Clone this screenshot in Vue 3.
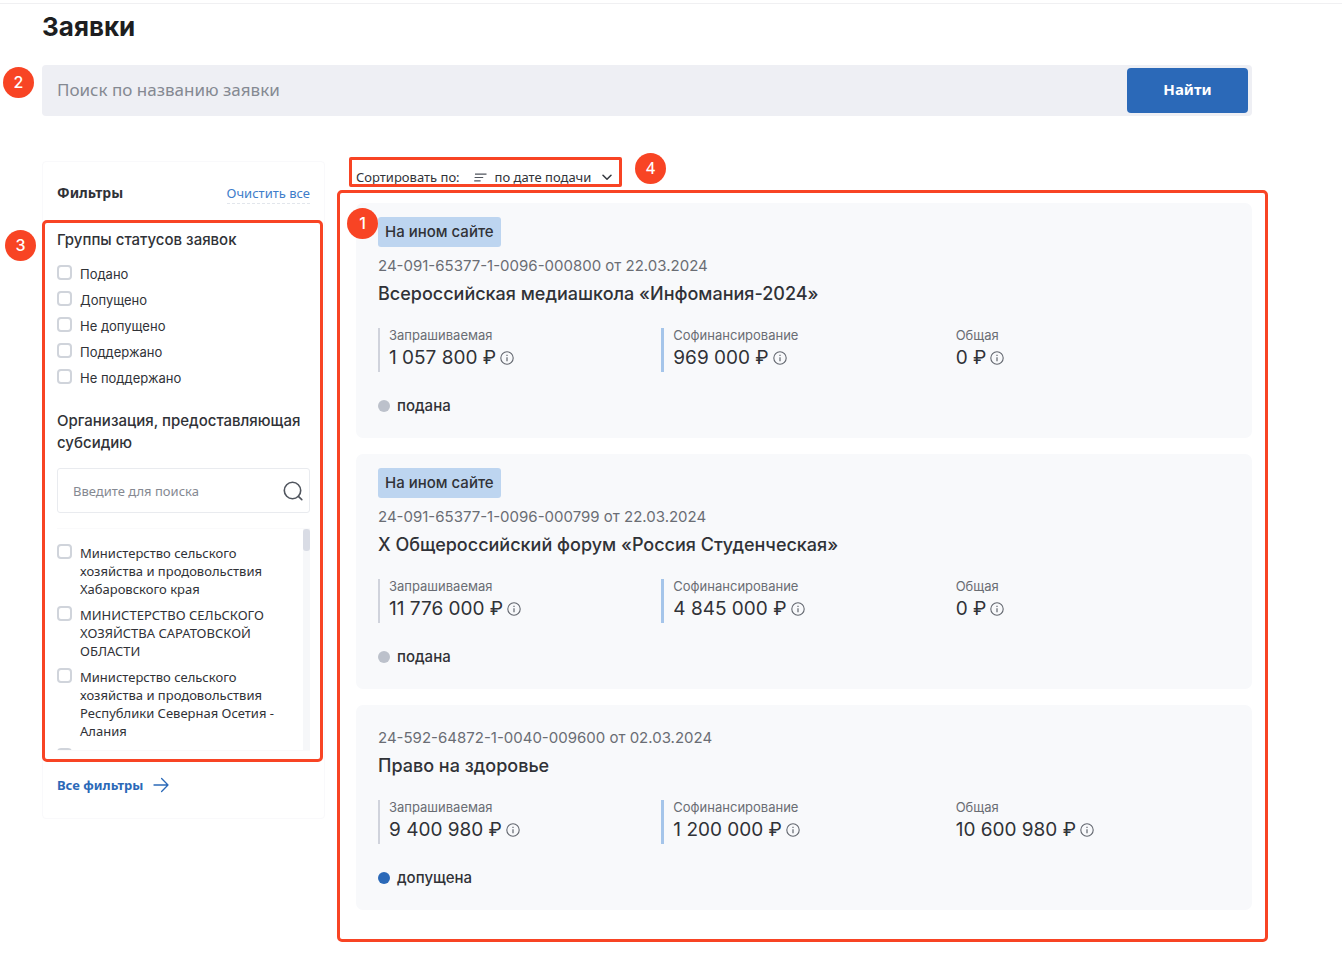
<script setup>
import { ref } from 'vue'

const query = ref('')
const orgQuery = ref('')
const sort = ref('date')

const statuses = ref([
  { id: 'submitted', label: 'Подано', checked: false },
  { id: 'admitted', label: 'Допущено', checked: false },
  { id: 'rejected', label: 'Не допущено', checked: false },
  { id: 'supported', label: 'Поддержано', checked: false },
  { id: 'unsupported', label: 'Не поддержано', checked: false }
])

const organizations = ref([
  { id: 'khv', label: 'Министерство сельского хозяйства и продовольствия Хабаровского края', checked: false },
  { id: 'sar', label: 'МИНИСТЕРСТВО СЕЛЬСКОГО ХОЗЯЙСТВА САРАТОВСКОЙ ОБЛАСТИ', checked: false },
  { id: 'ose', label: 'Министерство сельского хозяйства и продовольствия Республики Северная Осетия - Алания', checked: false },
  { id: 'next', label: '', checked: false }
])

const cards = [
  {
    tag: 'На ином сайте',
    meta: '24-091-65377-1-0096-000800 от 22.03.2024',
    title: 'Всероссийская медиашкола «Инфомания-2024»',
    sums: ['1 057 800 ₽', '969 000 ₽', '0 ₽'],
    status: 'подана',
    active: false
  },
  {
    tag: 'На ином сайте',
    meta: '24-091-65377-1-0096-000799 от 22.03.2024',
    title: 'X Общероссийский форум «Россия Студенческая»',
    sums: ['11 776 000 ₽', '4 845 000 ₽', '0 ₽'],
    status: 'подана',
    active: false
  },
  {
    tag: '',
    meta: '24-592-64872-1-0040-009600 от 02.03.2024',
    title: 'Право на здоровье',
    sums: ['9 400 980 ₽', '1 200 000 ₽', '10 600 980 ₽'],
    status: 'допущена',
    active: true
  }
]
const sumLabels = ['Запрашиваемая', 'Софинансирование', 'Общая']
</script>

<template>
  <div class="page">
    <h1>Заявки</h1>

    <form class="search" role="search" @submit.prevent>
      <input v-model="query" type="text" placeholder="Поиск по названию заявки" aria-label="Поиск по названию заявки" />
      <button type="submit">Найти</button>
      <span class="badge badge-search">2</span>
    </form>

    <div class="columns">
      <aside class="filters">
        <div class="filters-head">
          <h2>Фильтры</h2>
          <button type="button" class="clear">Очистить все</button>
        </div>

        <div class="groups">
          <span class="frame frame-filters"></span>
          <span class="badge badge-filters">3</span>

          <h3>Группы статусов заявок</h3>
          <ul class="statuses">
            <li v-for="s in statuses" :key="s.id">
              <label class="check">
                <input v-model="s.checked" type="checkbox" />
                <span>{{ s.label }}</span>
              </label>
            </li>
          </ul>

          <h3 class="org-title">Организация, предоставляющая субсидию</h3>
          <div class="org-search">
            <input v-model="orgQuery" type="text" placeholder="Введите для поиска" aria-label="Введите для поиска" />
            <svg width="20" height="20" viewBox="0 0 20 20" fill="none" stroke="#50555e" stroke-width="1.6" stroke-linecap="round" aria-hidden="true">
              <circle cx="9.5" cy="9.5" r="8.2" />
              <path d="M15.4 15.4 18.8 18.6" />
            </svg>
          </div>

          <div class="org-list">
            <ul>
              <li v-for="o in organizations" :key="o.id">
                <label class="check">
                  <input v-model="o.checked" type="checkbox" :aria-label="o.label || 'Организация'" />
                  <span>{{ o.label }}</span>
                </label>
              </li>
            </ul>
            <span class="track"><span class="thumb"></span></span>
          </div>
        </div>

        <a href="#" class="all">
          Все фильтры
          <svg width="16" height="16" viewBox="0 0 16 16" fill="none" stroke="currentColor" stroke-width="1.3" stroke-linecap="round" stroke-linejoin="round" aria-hidden="true">
            <path d="M1 8h14M8.6 1.5 15 8l-6.4 6.5" />
          </svg>
        </a>
      </aside>

      <main>
        <div class="sort">
          <span class="frame frame-sort"></span>
          <label for="sort">Сортировать по:</label>
          <svg class="lines" width="13" height="9" viewBox="0 0 13 9" fill="none" stroke="#50555e" stroke-width="1.2" aria-hidden="true">
            <path d="M1 1.2h11.5M.6 4.5h8.6M.2 7.8h6.4" />
          </svg>
          <span class="select">
            <select id="sort" v-model="sort">
              <option value="date">по дате подачи</option>
            </select>
            <svg width="10" height="7" viewBox="0 0 10 7" fill="none" stroke="#34373d" stroke-width="1.5" stroke-linecap="round" stroke-linejoin="round" aria-hidden="true">
              <path d="M1 1.2l4 4 4-4" />
            </svg>
          </span>
          <span class="badge badge-sort">4</span>
        </div>

        <div class="cards">
          <span class="frame frame-cards"></span>
          <span class="badge badge-cards">1</span>

          <article v-for="c in cards" :key="c.meta" class="card">
            <span v-if="c.tag" class="tag">{{ c.tag }}</span>
            <p class="meta">{{ c.meta }}</p>
            <h2>{{ c.title }}</h2>
            <dl>
              <div v-for="(sum, i) in c.sums" :key="i">
                <dt>{{ sumLabels[i] }}</dt>
                <dd>
                  {{ sum }}
                  <button type="button" class="info" :aria-label="sumLabels[i]">
                    <svg width="14" height="14" viewBox="0 0 14 14" fill="none" stroke="#63676f" aria-hidden="true">
                      <circle cx="7" cy="7" r="6.2" stroke-width="1.1" />
                      <path d="M7 6.3v3.9M7 3.8v1.2" stroke-width="1.2" />
                    </svg>
                  </button>
                </dd>
              </div>
            </dl>
            <p class="status" :class="{ active: c.active }">{{ c.status }}</p>
          </article>
        </div>
      </main>
    </div>
  </div>
</template>

<style>
body {
  background: #fff;
}
</style>

<style scoped>
.page {
  --red: #f84424;
  --humanist: "Noto Sans", "Open Sans", sans-serif;
  box-sizing: border-box;
  margin-top: 3px;
  padding: 4px 90px 60px 42px;
  border-top: 1px solid #f0f0f2;
  font-family: Inter, "Liberation Sans", sans-serif;
  font-size: 14px;
  line-height: 20px;
  color: #303237;
}
.page *,
.page *::before {
  box-sizing: border-box;
}
h1, h2, h3, p, ul, dl, dd {
  margin: 0;
  padding: 0;
}
ul {
  list-style: none;
}
button, input, select {
  font: inherit;
  color: inherit;
  margin: 0;
}
button {
  border: 0;
  padding: 0;
  background: none;
  cursor: pointer;
}
h1 {
  font-size: 26px;
  line-height: 38px;
  font-weight: 700;
  color: #1d1e21;
}

/* Annotation marks */
.badge {
  position: absolute;
  z-index: 2;
  width: 31px;
  height: 31px;
  border-radius: 50%;
  background: var(--red);
  color: #fff;
  font-size: 16px;
  line-height: 31px;
  font-weight: 500;
  text-align: center;
}
.frame {
  position: absolute;
  z-index: 1;
  border: 3px solid var(--red);
  border-radius: 5px;
  pointer-events: none;
}
.badge-search { left: -39px; top: 2px; }
.badge-filters { left: -52px; top: 10px; }
.badge-sort { left: 279px; top: -14px; }
.badge-cards { left: -9px; top: 5px; }
.frame-filters { inset: 0 -13px 0 -15px; }
.frame-sort { left: -7px; top: -10px; width: 273px; height: 30px; border-radius: 2px; }
.frame-cards { inset: -13px -16px -32px -19px; }

/* Search */
.search {
  position: relative;
  display: flex;
  margin-top: 19px;
  padding: 3px 4px 3px 0;
  border-radius: 4px;
  background: #eeeff4;
}
.search input {
  flex: 1;
  min-width: 0;
  height: 45px;
  padding: 0 15px 3px;
  border: 0;
  background: transparent;
  font-family: var(--humanist);
  font-size: 17px;
}
input::placeholder {
  color: #858992;
  opacity: 1;
}
.search button {
  width: 121px;
  padding-bottom: 3px;
  border-radius: 4px;
  background: #2b69b8;
  color: #fff;
  font-family: var(--humanist);
  font-size: 15px;
  font-weight: 700;
}

.columns {
  display: flex;
  align-items: flex-start;
  gap: 31px;
  margin-top: 45px;
}

/* Filters */
.filters {
  flex: 0 0 283px;
  padding: 20px 14px 22px;
  border: 1px solid #f9f9fb;
  border-radius: 4px;
}
.filters-head {
  display: flex;
  justify-content: space-between;
  align-items: center;
  font-family: var(--humanist);
}
.filters-head h2 {
  font-size: 14px;
  line-height: 22px;
  font-weight: 700;
}
.clear {
  border-bottom: 1px dashed #e2e6ec;
  font-size: 13px;
  line-height: 20px;
  color: #3e7dca;
}
.groups {
  position: relative;
  margin-top: 16px;
  padding: 9px 0 11px;
}
h3 {
  font-size: 15px;
  line-height: 22px;
  font-weight: 500;
}
.statuses {
  display: grid;
  gap: 8px;
  margin-top: 14px;
}
.check {
  display: flex;
  gap: 8px;
  font-size: 13px;
  line-height: 18px;
}
.check input {
  appearance: none;
  flex: 0 0 15px;
  height: 15px;
  border: 2px solid #d0d4db;
  border-radius: 4px;
  background: #fff;
}
.check input:checked {
  background: #2b69b8;
}
.org-title {
  margin-top: 23px;
}
.org-search {
  display: flex;
  align-items: center;
  height: 45px;
  margin-top: 14px;
  padding: 0 6px 0 15px;
  border: 1px solid #e9ebef;
  border-radius: 3px;
}
.org-search input {
  flex: 1;
  min-width: 0;
  padding: 0;
  border: 0;
  background: none;
  font-family: var(--humanist);
  font-size: 13px;
}
.org-list {
  display: flex;
  justify-content: space-between;
  height: 223px;
  margin-top: 15px;
  border: solid #fafafb;
  border-width: 1px 0;
  overflow: hidden;
  font-family: var(--humanist);
}
.org-list ul {
  display: grid;
  align-content: start;
  gap: 8px;
  width: 230px;
  padding-top: 15px;
}
.track {
  width: 7px;
  background: #f6f7f9;
}
.thumb {
  display: block;
  height: 22px;
  border-radius: 3px;
  background: #d9dce5;
}
.all {
  display: inline-flex;
  align-items: center;
  gap: 10px;
  margin-top: 12px;
  font-family: var(--humanist);
  font-size: 13px;
  font-weight: 700;
  line-height: 22px;
  color: #2b69b8;
  text-decoration: none;
}

/* Sorting */
main {
  flex: 1;
  min-width: 0;
  padding-top: 6px;
}
.sort {
  position: relative;
  display: flex;
  align-items: center;
  height: 20px;
  font-family: var(--humanist);
  font-size: 13px;
}
.lines {
  margin: 0 8px 0 14px;
}
.select {
  display: flex;
  align-items: center;
  gap: 10px;
}
select {
  appearance: none;
  padding: 0;
  border: 0;
  background: none;
}

/* Cards */
.cards {
  position: relative;
  display: grid;
  gap: 16px;
  margin-top: 16px;
}
.card {
  padding: 14px 24px 22px 22px;
  border-radius: 7px;
  background: #f8f9fb;
}
.tag {
  display: block;
  width: fit-content;
  padding: 0 7px;
  border-radius: 3px;
  background: #bdd5f0;
  font-size: 15px;
  line-height: 30px;
  font-weight: 500;
}
.meta {
  margin-top: 8px;
  font-size: 15px;
  line-height: 22px;
  color: #6a6d74;
}
.card h2 {
  margin-top: 4px;
  font-size: 18px;
  line-height: 26px;
  font-weight: 500;
}
dl {
  display: grid;
  grid-template-columns: repeat(3, 1fr);
  margin-top: 21px;
}
dl div {
  height: 44px;
  padding-left: 9px;
  border-left: 2px solid #d0d3dc;
}
dl div:nth-child(2) {
  border-left: 3px solid #a5c5ea;
}
dl div:nth-child(3) {
  border-left-color: transparent;
}
dt {
  font-size: 13px;
  line-height: 14px;
  color: #6a6d74;
}
dd {
  display: flex;
  align-items: center;
  gap: 4px;
  margin-top: 3px;
  font-size: 19px;
  line-height: 26px;
  white-space: nowrap;
}
.info {
  display: flex;
}
.status {
  display: flex;
  align-items: center;
  gap: 7px;
  margin-top: 24px;
  font-size: 15px;
  font-weight: 500;
}
.status::before {
  content: "";
  width: 12px;
  height: 12px;
  border-radius: 50%;
  background: #bcc1cb;
}
.status.active::before {
  background: #2b69b8;
}
</style>
